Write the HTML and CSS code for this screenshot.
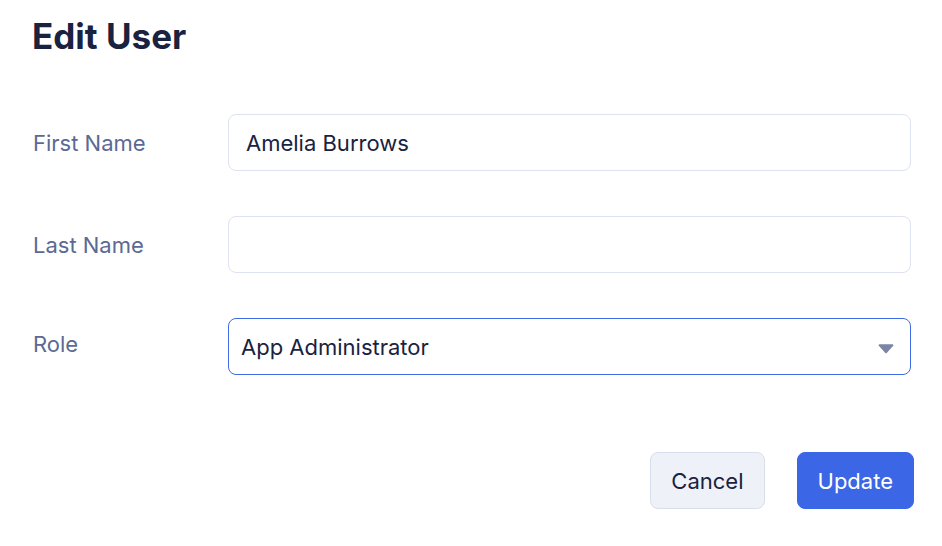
FILE: index.html
```html
<!DOCTYPE html>
<html lang="en">
<head>
<meta charset="utf-8">
<title>Edit User</title>
<link rel="stylesheet" href="styles.css">
</head>
<body>
<div class="page">
  <h1 class="title">Edit User</h1>
  <form class="form">
    <div class="row">
      <label class="label">First Name</label>
      <div class="field"><span class="value">Amelia Burrows</span></div>
    </div>
    <div class="row">
      <label class="label">Last Name</label>
      <div class="field"></div>
    </div>
    <div class="row row-role">
      <label class="label">Role</label>
      <div class="field select">
        <span class="value">App Administrator</span>
        <svg class="caret" width="16" height="11" viewBox="0 0 16 11"><path d="M1.5 1.2h13c.8 0 1.2.9.7 1.5l-6.5 7.2c-.4.4-1 .4-1.4 0L.8 2.7c-.5-.6-.1-1.5.7-1.5z" fill="#7b86a6"/></svg>
      </div>
    </div>
    <div class="actions">
      <button type="button" class="btn btn-cancel">Cancel</button>
      <button type="button" class="btn btn-primary">Update</button>
    </div>
  </form>
</div>
</body>
</html>
```
FILE: styles.css
```css
* { box-sizing: border-box; }
html, body { margin: 0; padding: 0; background: #ffffff; }
body {
  font-family: Inter, "Noto Sans", "Liberation Sans", sans-serif;
  color: #19223f;
}
.page {
  padding: 15px 31px 0 32px;
}
.title {
  margin: 0;
  font-size: 35px;
  line-height: 42px;
  font-weight: 700;
  color: #19223f;
}
.form {
  margin-top: 57px;
  display: flex;
  flex-direction: column;
  gap: 45px;
}
.row {
  display: grid;
  grid-template-columns: 196px 1fr;
  align-items: center;
}
.label {
  font-size: 22px;
  color: #5b6a92;
  padding-left: 1px;
}
.row-role .label { margin-top: -5px; }
.field {
  height: 57px;
  border: 1px solid #dfe2f0;
  border-radius: 8px;
  display: flex;
  align-items: center;
  padding: 0 17px;
  background: #fff;
}
.value {
  font-size: 22px;
  color: #19223f;
}
.select {
  border: 1.5px solid #3e6ae6;
  padding: 0 16px 0 12px;
  justify-content: space-between;
}
.caret { display: block; margin-top: 3px; }
.actions {
  margin-top: 32px;
  margin-right: -3px;
  display: flex;
  justify-content: flex-end;
  gap: 32px;
}
.btn {
  height: 57px;
  border-radius: 8px;
  font-family: inherit;
  font-size: 22px;
  padding: 0 20px;
  cursor: pointer;
}
.btn-cancel {
  background: #eef1f8;
  border: 1px solid #d9deec;
  color: #19223f;
}
.btn-primary {
  background: #3b66e6;
  border: 1px solid #3b66e6;
  color: #ffffff;
}
```
